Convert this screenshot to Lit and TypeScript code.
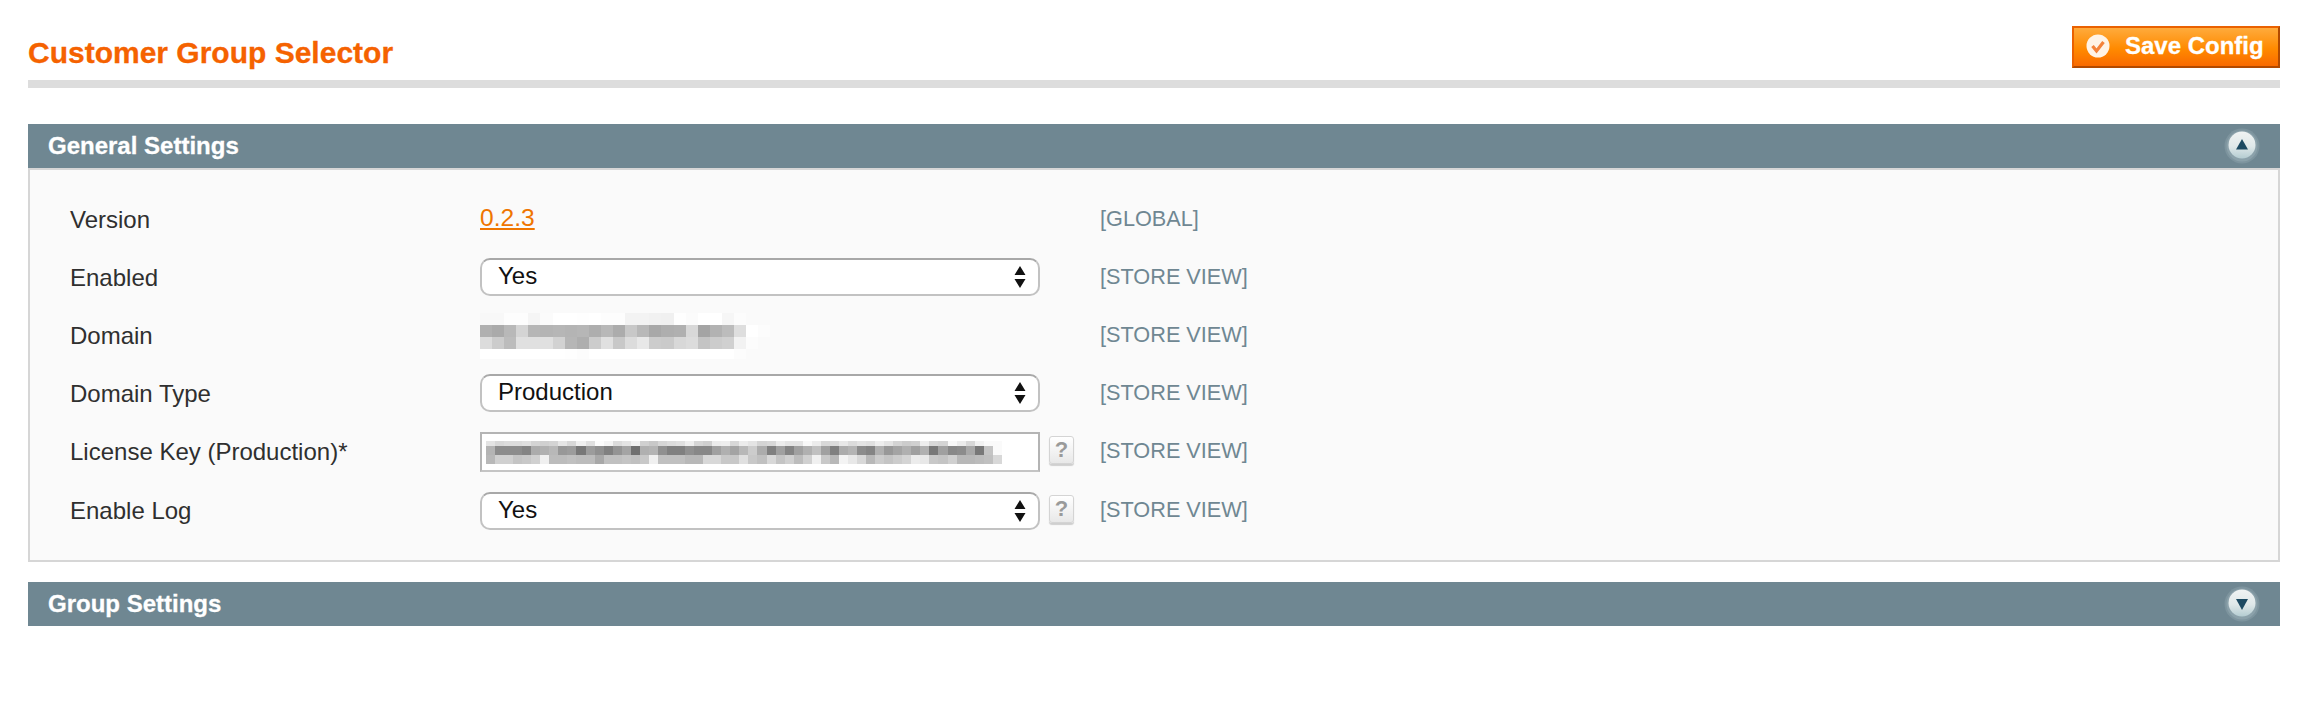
import { LitElement, html, css, svg } from "lit";
import { customElement } from "lit/decorators.js";

const domainBlur = [
  "f8 f8 fd fd f5 fb ff ff fe ff fd fd f3 f3 f1 f0 fe fb ff ff f6 fc",
  "b0 aa b8 d4 b6 b4 b6 b4 b6 ae b8 ac c8 b8 a8 ae b0 d8 a4 b2 bc de ff fc",
  "dc cc bc e0 e0 e0 d2 b6 ae cc e0 c8 dc e8 cc ca d8 dc c4 cc d0 f2 fc",
  "ff ff ff ff ff ff ff fe fc ff ff ff ff ff ff ff ff ff ff ff ff fc",
];
const licenseBlur = [
  "e4 d8 dc dc e0 d4 d0 d4 e6 d8 f0 e0 fc f4 dc e4 f2 d0 c8 d6 dc e0 ee d6 d0 ec ee d8 ec e4 d4 d8 ec e4 e4 f8 ec d8 dc e8 dc e4 e0 ee e4 d4 cc d0 ee d8 d4 f8 ec d8 f2 fa fa",
  "b4 8c 8c 8c 84 ac b0 b8 98 9c 78 9c 90 80 94 a4 70 b0 b4 90 80 80 90 88 88 a0 b0 a4 b8 cc ac 80 a0 84 a0 b0 c0 a0 80 ac b4 8c 84 b0 98 a4 b0 a0 b0 78 a0 88 8c a8 78 c4 fa",
  "b8 d0 d0 c4 c8 d0 f0 bc bc c0 bc bc a8 c0 c0 c4 c0 c8 f0 c0 c0 c0 b8 b8 d8 d8 c8 c8 e0 c8 c0 d8 c4 d0 bc d0 f0 c8 b8 f4 e8 d8 b8 cc c4 cc d4 ec e8 c8 c4 d0 b8 b8 bc c0 d8",
];

function blur(rows: string[], cw: number, heights: number[]) {
  const w = Math.max(...rows.map((r) => r.split(" ").length)) * cw;
  const h = heights.reduce((a, b) => a + b, 0);
  let y = 0;
  return html`<svg class="blur" width=${w} height=${h} viewBox="0 0 ${w} ${h}" shape-rendering="crispEdges" aria-hidden="true">
    ${rows.map((row, i) => {
      const top = y;
      y += heights[i];
      return row.split(" ").map((c) => `#${c}${c}${c}`).map((fill, x) => svg`<rect x=${x * cw} y=${top} width=${cw} height=${heights[i]} fill=${fill}></rect>`);
    })}
  </svg>`;
}

const arrows = html`<svg class="arrows" width="12" height="28" viewBox="0 0 12 28" aria-hidden="true"><path d="M6 3 L11.5 12 H.5 Z M.5 16 H11.5 L6 25 Z" fill="#111"></path></svg>`;
const help = html`<span class="help">?</span>`;

function toggle(up: boolean) {
  const id = up ? "tgu" : "tgd";
  return html`<span class="toggle">
    <svg width="36" height="36" viewBox="0 0 36 36" aria-hidden="true">
      <defs><linearGradient id=${id} x1="0" y1="0" x2="0" y2="1"><stop offset="0" stop-color="#f0f3f3"></stop><stop offset=".55" stop-color="#dfe8e9"></stop><stop offset="1" stop-color="#b4ccd1"></stop></linearGradient></defs>
      <circle cx="18" cy="18" r="17.5" fill="#7d949e"></circle>
      <circle cx="18" cy="18" r="15.5" fill="#8ba1aa"></circle>
      <circle cx="18" cy="17" r="13.5" fill="url(#${id})"></circle>
      <path d=${up ? "M18 11 L24 21.5 H12 Z" : "M12 13 H24 L18 24 Z"} fill="#1c4a62"></path>
    </svg>
  </span>`;
}

@customElement("app-root")
export class AppRoot extends LitElement {
  static styles = css`
    :host { display: block; height: 710px; background: #fff; font-family: "Liberation Sans", Arial, sans-serif; color: #2f2f2f; padding: 26px 30px 0 28px; box-sizing: border-box; }
    .head { display: flex; justify-content: space-between; align-items: flex-start; height: 54px; border-bottom: 8px solid #ddd; margin-bottom: 36px; }
    h1 { margin: 9px 0 0 0; font-size: 30px; line-height: 36px; font-weight: bold; color: #f56200; -webkit-text-stroke: 0.3px #f56200; }
    .save { display: flex; align-items: center; box-sizing: border-box; width: 208px; height: 42px; padding: 0 0 2px 12px; border: 2px solid #ea6100; border-right-color: #b24a00; border-bottom-color: #b24a00; background: linear-gradient(#ffab3c, #ff8a00 55%, #f96a00); color: #fff; font: bold 24px "Liberation Sans", Arial, sans-serif; -webkit-text-stroke: 0.3px #fff; }
    .save svg { margin-right: 15px; flex: none; }
    .bar { display: flex; align-items: center; justify-content: space-between; height: 44px; background: #6f8792; color: #fff; font-size: 24px; font-weight: bold; padding: 0 20px 0 20px; -webkit-text-stroke: 0.3px #fff; }
    .panel { box-sizing: border-box; height: 394px; border: 2px solid #d6d6d6; background: #fafafa; padding: 21px 0 0 40px; margin-bottom: 20px; }
    .grid { display: grid; grid-template-columns: 410px 620px auto; grid-template-rows: 58px 58px 58px 58px 58px 60px; align-items: center; font-size: 24px; }
    .value { display: flex; align-items: center; gap: 9px; }
    .link { color: #ef7500; text-decoration: underline; font-size: 24.6px; margin-bottom: 5px; }
    .scope { color: #6f8792; font-size: 21.7px; margin-bottom: 2px; }
    .sel { position: relative; display: block; width: 560px; height: 38px; margin-bottom: 2px; }
    .last .sel { margin-bottom: 0; }
    select { display: block; width: 100%; height: 100%; box-sizing: border-box; appearance: none; -webkit-appearance: none; background: #fff; border: 2px solid #c2c2c2; border-top-color: #a8a8a8; border-radius: 10px; padding: 0 16px 4px; font: 24px "Liberation Sans", Arial, sans-serif; color: #111; margin: 0; }
    .arrows { position: absolute; right: 14px; top: 5px; pointer-events: none; }
    .text { display: flex; align-items: center; box-sizing: border-box; width: 560px; height: 40px; background: #fff; border: 2px solid #b4b4b4; border-bottom-color: #c4c4c4; padding: 0 0 0 4px; }
    .help { display: flex; align-items: center; justify-content: center; box-sizing: border-box; width: 25px; height: 28px; margin-bottom: 4px; background: linear-gradient(#fff, #e8e8e8); border: 1px solid #d4d4d4; border-radius: 3px; color: #9a9a9a; font-size: 22px; font-weight: bold; box-shadow: 0 2px 1px #cfcfcf; }
    .blur { display: block; }
    .toggle { display: flex; }
  `;

  private sel(v: string) {
    return html`<span class="sel"><select aria-label=${v}><option>${v}</option></select>${arrows}</span>`;
  }

  render() {
    return html`
      <div class="head">
        <h1>Customer Group Selector</h1>
        <div class="save">
          <svg width="24" height="24" viewBox="0 0 24 24" aria-hidden="true"><circle cx="12" cy="12" r="11.5" fill="#fff3e6"></circle><path d="M6.5 12 L10.5 17 L17.5 8" fill="none" stroke="#f4823a" stroke-width="3.2"></path></svg>
          <span>Save Config</span>
        </div>
      </div>
      <div class="bar"><span>General Settings</span>${toggle(true)}</div>
      <div class="panel">
        <div class="grid">
          <div>Version</div><div class="value"><span class="link">0.2.3</span></div><div class="scope">[GLOBAL]</div>
          <div>Enabled</div><div class="value">${this.sel("Yes")}</div><div class="scope">[STORE VIEW]</div>
          <div>Domain</div><div class="value">${blur(domainBlur, 12.1, [12, 12, 12, 10])}</div><div class="scope">[STORE VIEW]</div>
          <div>Domain Type</div><div class="value">${this.sel("Production")}</div><div class="scope">[STORE VIEW]</div>
          <div>License Key (Production)*</div><div class="value"><div class="text">${blur(licenseBlur, 9.05, [5, 9, 9])}</div>${help}</div><div class="scope">[STORE VIEW]</div>
          <div>Enable Log</div><div class="value last">${this.sel("Yes")}${help}</div><div class="scope">[STORE VIEW]</div>
        </div>
      </div>
      <div class="bar"><span>Group Settings</span>${toggle(false)}</div>
    `;
  }
}
